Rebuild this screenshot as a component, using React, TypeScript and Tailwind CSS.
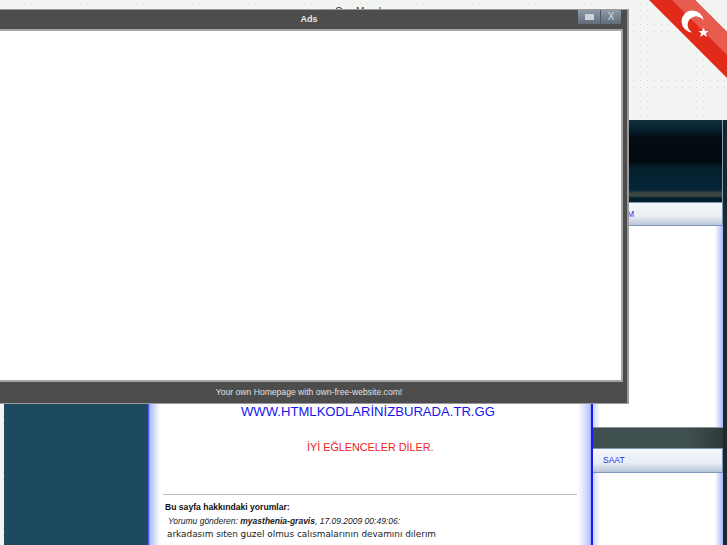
export default function App() {
  return (
    <div className="relative h-[545px] w-[727px] overflow-hidden bg-[#f3f5f3] bg-[radial-gradient(#d4d7d4_0.8px,transparent_1px)] bg-[length:7px_7px] font-['Liberation_Sans',sans-serif]">
      <div className="h-[120px] pl-[335px] pt-[4px] text-[10px] text-[#333]">Gov Mood</div>

      <div className="ml-[4px] flex h-[425px] w-[723px] flex-col">
        {/* Header band */}
        <div className="flex h-[82px]">
          <div className="w-[718px] bg-[linear-gradient(#12303f_0px,#08202d_10px,#020c12_18px,#010a10_42px,#05202e_48px,#06263a_70px,#3c4644_73px,#3c4644_76px,#04202f_78px)]" />
          <div className="w-[1px] bg-[#8a9aa5]" />
          <div className="flex-1 bg-[#12262f]" />
        </div>

        <div className="flex min-h-0 flex-1">
          {/* Left column */}
          <div className="w-[144px] bg-[#1d4a5f]" />

          {/* Center content */}
          <div className="flex w-[443px] flex-col bg-[linear-gradient(to_right,#2a3cf5_0px,#aebcff_2px,#ffffff_12px,#ffffff_430px,#c0cbff_441px,#9dabff_443px)]">
            <div className="h-[202px]" />
            <div className="pl-[93px] text-[13.1px] leading-[16px] text-[#1414ee]">WWW.HTMLKODLARİNİZBURADA.TR.GG</div>
            <div className="mt-[20px] pl-[159px] text-[10.8px] leading-[14px] text-[#ee2222]">İYİ EĞLENCELER DİLER.</div>
            <div className="ml-[15px] mt-[40px] h-[1px] w-[414px] bg-[#bdbdbd]" />
            <div className="mt-[7px] pl-[17px] text-[8.6px] font-bold leading-[11px] text-[#111]">Bu sayfa hakkındaki yorumlar:</div>
            <div className="mt-[3px] pl-[20px] text-[8.5px] italic leading-[11px] text-[#222]">
              Yorumu gönderen: <b>myasthenia-gravis</b>, 17.09.2009 00:49:06:
            </div>
            <div className="pl-[19px] font-['DejaVu_Sans',sans-serif] text-[8.9px] leading-[14px] text-[#222]">
              arkadasım sıten guzel olmus calısmalarının devamını dılerım
            </div>
          </div>

          {/* Right sidebar */}
          <div className="flex w-[132px] flex-col border-l-2 border-[#1a1af0]">
            <div className="flex h-[24px] items-center border border-l-0 border-[#7f96b8] bg-[linear-gradient(#f4f7fb,#e8eef3_60%,#b9c6da)] pl-[10px] text-[8.5px] text-[#2a2af0]">
              FORUM
            </div>
            <div className="h-[201px] bg-[linear-gradient(to_right,#c8d2ff_0px,#ffffff_7px,#ffffff_122px,#a8b6ff_130px)]" />
            <div className="h-[21px] border-t border-[#8a9498] bg-[linear-gradient(to_right,#3f4f50_95px,#2f3a38)]" />
            <div className="flex h-[25px] items-center border border-l-0 border-[#7f96b8] bg-[linear-gradient(#f4f7fb,#e8eef3_60%,#b9c6da)] pl-[10px] text-[8.5px] text-[#2a2af0]">
              SAAT
            </div>
            <div className="flex-1 bg-[linear-gradient(to_right,#c8d2ff_0px,#ffffff_7px,#ffffff_122px,#a8b6ff_130px)]" />
          </div>

          {/* Dark strip on the right edge */}
          <div className="flex-1 bg-[#1c2a30]" />
        </div>
      </div>

      {/* Ribbon */}
      <svg className="absolute right-0 top-0" width="78" height="80" viewBox="649 0 78 80">
        <polygon points="649,0 695,0 727,32 727,78" fill="#e12a1a" />
        <polygon points="672,0 695,0 727,32 727,55" fill="#e85c50" />
        <path d="M703.5 20.5 A11 11 0 1 0 692.5 32.5 A8.5 8.5 0 1 1 703.5 20.5 Z" fill="#fff" />
        <polygon points="703.5,27.5 705,31 708.5,31 705.8,33.2 707,37 703.5,34.7 700,37 701.2,33.2 698.5,31 702,31" fill="#fff" />
      </svg>

      {/* Ads popup */}
      <div className="absolute left-[-10px] top-[9px] flex h-[395px] w-[639px] flex-col border border-r-2 border-[#9a9a9a] bg-[#4d4d4d]">
        <div className="relative flex h-[19px] items-center justify-center text-[9px] font-bold text-[#e8e8e8]">
          Ads
          <div className="absolute right-[6px] top-0 flex h-[14px]">
            <div className="flex w-[22px] items-center justify-center bg-[linear-gradient(#8e9aa8,#5f6b78)]">
              <div className="h-[6px] w-[9px] bg-[#cfd4da]" />
            </div>
            <div className="flex w-[21px] items-center justify-center border-l border-[#4d5560] bg-[linear-gradient(#8e9aa8,#5f6b78)] text-[10px] font-normal leading-none text-[#d8dde2]">
              X
            </div>
          </div>
        </div>
        <div className="mr-[4px] flex-1 border-2 border-[#a5a5a5] bg-white" />
        <div className="flex h-[21px] items-center justify-center text-[8.6px] text-[#e0e0e0]">
          Your own Homepage with own-free-website.com!
        </div>
      </div>
    </div>
  );
}
